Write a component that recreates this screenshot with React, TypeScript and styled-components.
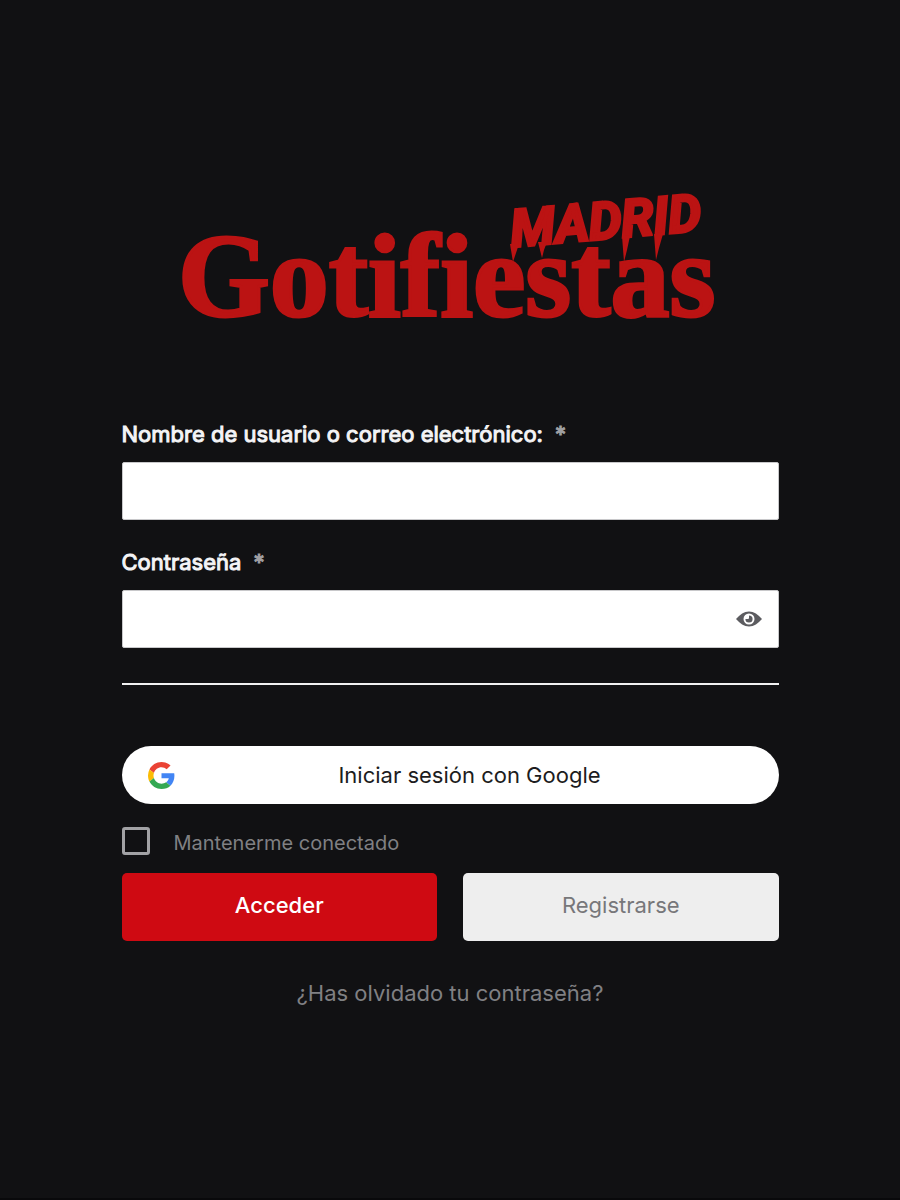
import React, { useState } from "react";
import styled, { createGlobalStyle } from "styled-components";

const GlobalStyle = createGlobalStyle`
  *, *::before, *::after { box-sizing: border-box; }
  body {
    margin: 0;
    background: #111113;
    color: #808083;
    font-family: Inter, "Liberation Sans", sans-serif;
    font-size: 22px;
    line-height: 28px;
  }
`;

const Page = styled.main`
  display: flex;
  flex-direction: column;
  align-items: center;
  min-height: 100vh;
  padding: 180px 0 60px;
  border-bottom: 2px solid #09090b;
`;

const Logo = styled.svg`
  display: block;
  width: 560px;
  max-width: 90%;
  height: auto;
  margin-bottom: 70px;
  fill: #bb1313;
  stroke: #bb1313;
  stroke-linejoin: miter;
`;

const Wordmark = styled.text`
  font-family: "Liberation Serif", serif;
  font-weight: 700;
  font-size: 118px;
  stroke-width: 3px;
`;

const City = styled.text`
  font-family: Roboto, "Liberation Sans", sans-serif;
  font-weight: 700;
  font-style: italic;
  font-size: 52px;
  stroke-width: 3px;
`;

const Form = styled.form`
  display: flex;
  flex-direction: column;
  width: 73%;
`;

const Field = styled.div`
  display: flex;
  flex-direction: column;
  gap: 14px;
  margin-bottom: 28px;
`;

const Label = styled.label`
  color: #f4f4f6;
  -webkit-text-stroke: 1px currentColor;
`;

const Required = styled.span`
  margin-left: 12px;
  color: #a0a0a3;
`;

const InputFrame = styled.div`
  display: flex;
  align-items: center;
  height: 58px;
  padding-right: 16px;
  background: #fff;
  border: 1px solid #c8c8ca;
  border-radius: 2px;
`;

const Input = styled.input`
  flex: 1;
  min-width: 0;
  height: 100%;
  padding: 0 16px;
  border: 0;
  outline: 0;
  background: transparent;
  color: #222;
  font: inherit;
`;

const EyeButton = styled.button`
  display: flex;
  padding: 0;
  border: 0;
  background: none;
  cursor: pointer;
`;

const Divider = styled.hr`
  width: 100%;
  height: 2px;
  margin: 7px 0 61px;
  border: 0;
  background: #f2f2f2;
`;

const GoogleButton = styled.button`
  display: flex;
  align-items: center;
  height: 58px;
  padding: 0 26px;
  border: 0;
  border-radius: 29px;
  background: #fff;
  color: #1c1c20;
  font: inherit;
  cursor: pointer;
`;

const GoogleText = styled.span`
  flex: 1;
  padding-left: 12px;
  text-align: center;
`;

const Remember = styled.label`
  display: flex;
  align-items: flex-end;
  gap: 24px;
  margin: 23px 0 18px;
  font-size: 20px;
  line-height: 24px;
`;

const Checkbox = styled.input`
  appearance: none;
  width: 28px;
  height: 28px;
  margin: 0;
  border: 3px solid #a2a2a5;
  border-radius: 3px;
  &:checked { background: #cf0a12; }
`;

const Actions = styled.div`
  display: grid;
  grid-template-columns: 1fr 1fr;
  gap: 26px;
  margin-bottom: 38px;
`;

const ActionButton = styled.button<{ $primary?: boolean }>`
  height: 68px;
  padding: 0 0 4px;
  border: 0;
  border-radius: 5px;
  background: ${(p) => (p.$primary ? "#cf0a12" : "#eeeeee")};
  color: ${(p) => (p.$primary ? "#ffffff" : "#77777a")};
  font: inherit;
  font-weight: ${(p) => (p.$primary ? 500 : 400)};
  cursor: pointer;
`;

const ForgotLink = styled.a`
  align-self: center;
  color: inherit;
  text-decoration: none;
`;

const EyeIcon = () => (
  <svg width="26" height="16" viewBox="0 0 26 16" aria-hidden="true">
    <path fill="#5c5c60" d="M0 8C4 3.500 8 .5 13 .5S22 3.500 26 8c-4 4.500-8 7.500-13 7.500S4 12.500 0 8z" />
    <circle cx="13" cy="8" r="5.5" fill="#fff" />
    <path fill="#5c5c60" d="M13 4.400A3.600 3.600 0 1 1 9.400 8H12a1 1 0 0 0 1-1z" />
  </svg>
);

const GoogleIcon = () => (
  <svg width="27" height="27" viewBox="0 0 48 48" aria-hidden="true">
    <path fill="#EA4335" d="M24 9.5c3.54 0 6.71 1.22 9.21 3.6l6.85-6.85C35.9 2.38 30.47 0 24 0 14.62 0 6.51 5.38 2.56 13.22l7.98 6.19C12.43 13.72 17.74 9.5 24 9.5z" />
    <path fill="#4285F4" d="M46.98 24.55c0-1.57-.15-3.09-.38-4.55H24v9.02h12.94c-.58 2.96-2.26 5.48-4.78 7.18l7.73 6c4.51-4.18 7.09-10.36 7.09-17.65z" />
    <path fill="#FBBC05" d="M10.53 28.59A14.5 14.5 0 0 1 9.77 24c0-1.6.27-3.14.76-4.59l-7.98-6.19A23.99 23.99 0 0 0 0 24c0 3.88.92 7.54 2.56 10.78l7.97-6.19z" />
    <path fill="#34A853" d="M24 48c6.48 0 11.93-2.13 15.89-5.81l-7.73-6c-2.15 1.45-4.92 2.3-8.16 2.3-6.26 0-11.57-4.22-13.47-9.91l-7.98 6.19C6.51 42.62 14.62 48 24 48z" />
  </svg>
);

export default function App() {
  const [visible, setVisible] = useState(false);
  return (
    <>
      <GlobalStyle />
      <Page>
        <Logo viewBox="-10 -10 560 170" role="img" aria-label="Gotifiestas Madrid">
          <Wordmark x="-2" y="126">Gotifiestas</Wordmark>
          <City x="332" y="57" transform="rotate(-5 332 57)">MADRID</City>
          {/* paint drips running down from the city name */}
          <path stroke="none" d="M330 54h9l-3 9-3 9zM358 52h9l-3 8-2 8zM442 46h8l-3 14-3 12zM474 44h9l-4 14-3 12z" />
        </Logo>
        <Form onSubmit={(e) => e.preventDefault()}>
          <Field>
            <Label htmlFor="username">
              Nombre de usuario o correo electrónico:<Required>*</Required>
            </Label>
            <InputFrame>
              <Input id="username" type="text" autoComplete="username" />
            </InputFrame>
          </Field>
          <Field>
            <Label htmlFor="password">
              Contraseña<Required>*</Required>
            </Label>
            <InputFrame>
              <Input id="password" type={visible ? "text" : "password"} autoComplete="current-password" />
              <EyeButton type="button" aria-label="Mostrar contraseña" onClick={() => setVisible(!visible)}>
                <EyeIcon />
              </EyeButton>
            </InputFrame>
          </Field>
          <Divider />
          <GoogleButton type="button">
            <GoogleIcon />
            <GoogleText>Iniciar sesión con Google</GoogleText>
          </GoogleButton>
          <Remember>
            <Checkbox type="checkbox" />
            Mantenerme conectado
          </Remember>
          <Actions>
            <ActionButton type="submit" $primary>Acceder</ActionButton>
            <ActionButton type="button">Registrarse</ActionButton>
          </Actions>
          <ForgotLink href="#recuperar">¿Has olvidado tu contraseña?</ForgotLink>
        </Form>
      </Page>
    </>
  );
}
